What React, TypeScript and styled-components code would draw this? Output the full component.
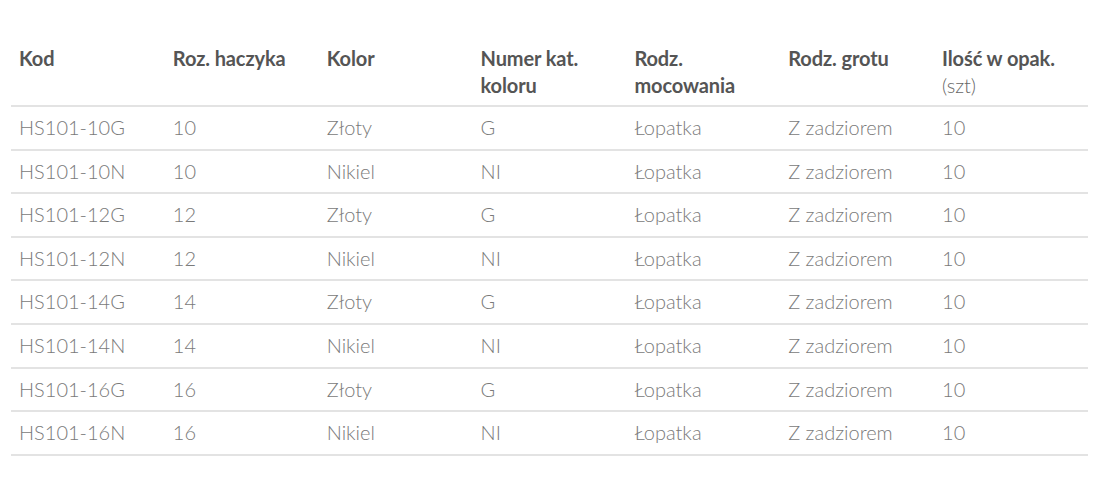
import * as React from 'react';
import styled, { createGlobalStyle } from 'styled-components';

const GlobalStyle = createGlobalStyle`
  body {
    margin: 0;
    background: #fff;
    font-family: Lato, "Open Sans", sans-serif;
  }
`;

const rows = [
  ['HS101-10G', '10', 'Złoty', 'G'],
  ['HS101-10N', '10', 'Nikiel', 'NI'],
  ['HS101-12G', '12', 'Złoty', 'G'],
  ['HS101-12N', '12', 'Nikiel', 'NI'],
  ['HS101-14G', '14', 'Złoty', 'G'],
  ['HS101-14N', '14', 'Nikiel', 'NI'],
  ['HS101-16G', '16', 'Złoty', 'G'],
  ['HS101-16N', '16', 'Nikiel', 'NI'],
];

export default function App() {
  return (
    <Page>
      <GlobalStyle />
      <Table>
        <colgroup>
          {Array.from({ length: 7 }).map((_, i) => (
            <col key={i} style={{ width: `${100 / 7}%` }} />
          ))}
        </colgroup>
        <thead>
          <tr>
            <Th>Kod</Th>
            <Th>Roz. haczyka</Th>
            <Th>Kolor</Th>
            <Th>Numer kat. koloru</Th>
            <Th>Rodz. mocowania</Th>
            <Th>Rodz. grotu</Th>
            <Th>
              Ilość w opak.
              <br />
              <Unit>(szt)</Unit>
            </Th>
          </tr>
        </thead>
        <tbody>
          {rows.map(([kod, roz, kolor, num]) => (
            <tr key={kod}>
              <Td>{kod}</Td>
              <Td>{roz}</Td>
              <Td>{kolor}</Td>
              <Td>{num}</Td>
              <Td>Łopatka</Td>
              <Td>Z zadziorem</Td>
              <Td>10</Td>
            </tr>
          ))}
        </tbody>
      </Table>
    </Page>
  );
}

const Page = styled.div`
  padding: 35px 17px 0 11px;
`;

const Table = styled.table`
  width: 1077px;
  border-collapse: collapse;
  table-layout: fixed;
  font-size: 20px;
  line-height: 25.6px;
`;

const Th = styled.th`
  text-align: left;
  vertical-align: top;
  padding: 10px 8px 6px;
  line-height: 27px;
  font-weight: 700;
  color: #555;
  border-bottom: 2px solid #e3e3e3;
  letter-spacing: -0.1px;
`;

const Unit = styled.span`
  font-weight: 300;
  font-size: 20px;
  color: #666;
`;

const Td = styled.td`
  padding: 8px 8px;
  font-weight: 300;
  color: #7a7a7a;
  border-bottom: 2px solid #e3e3e3;
`;
